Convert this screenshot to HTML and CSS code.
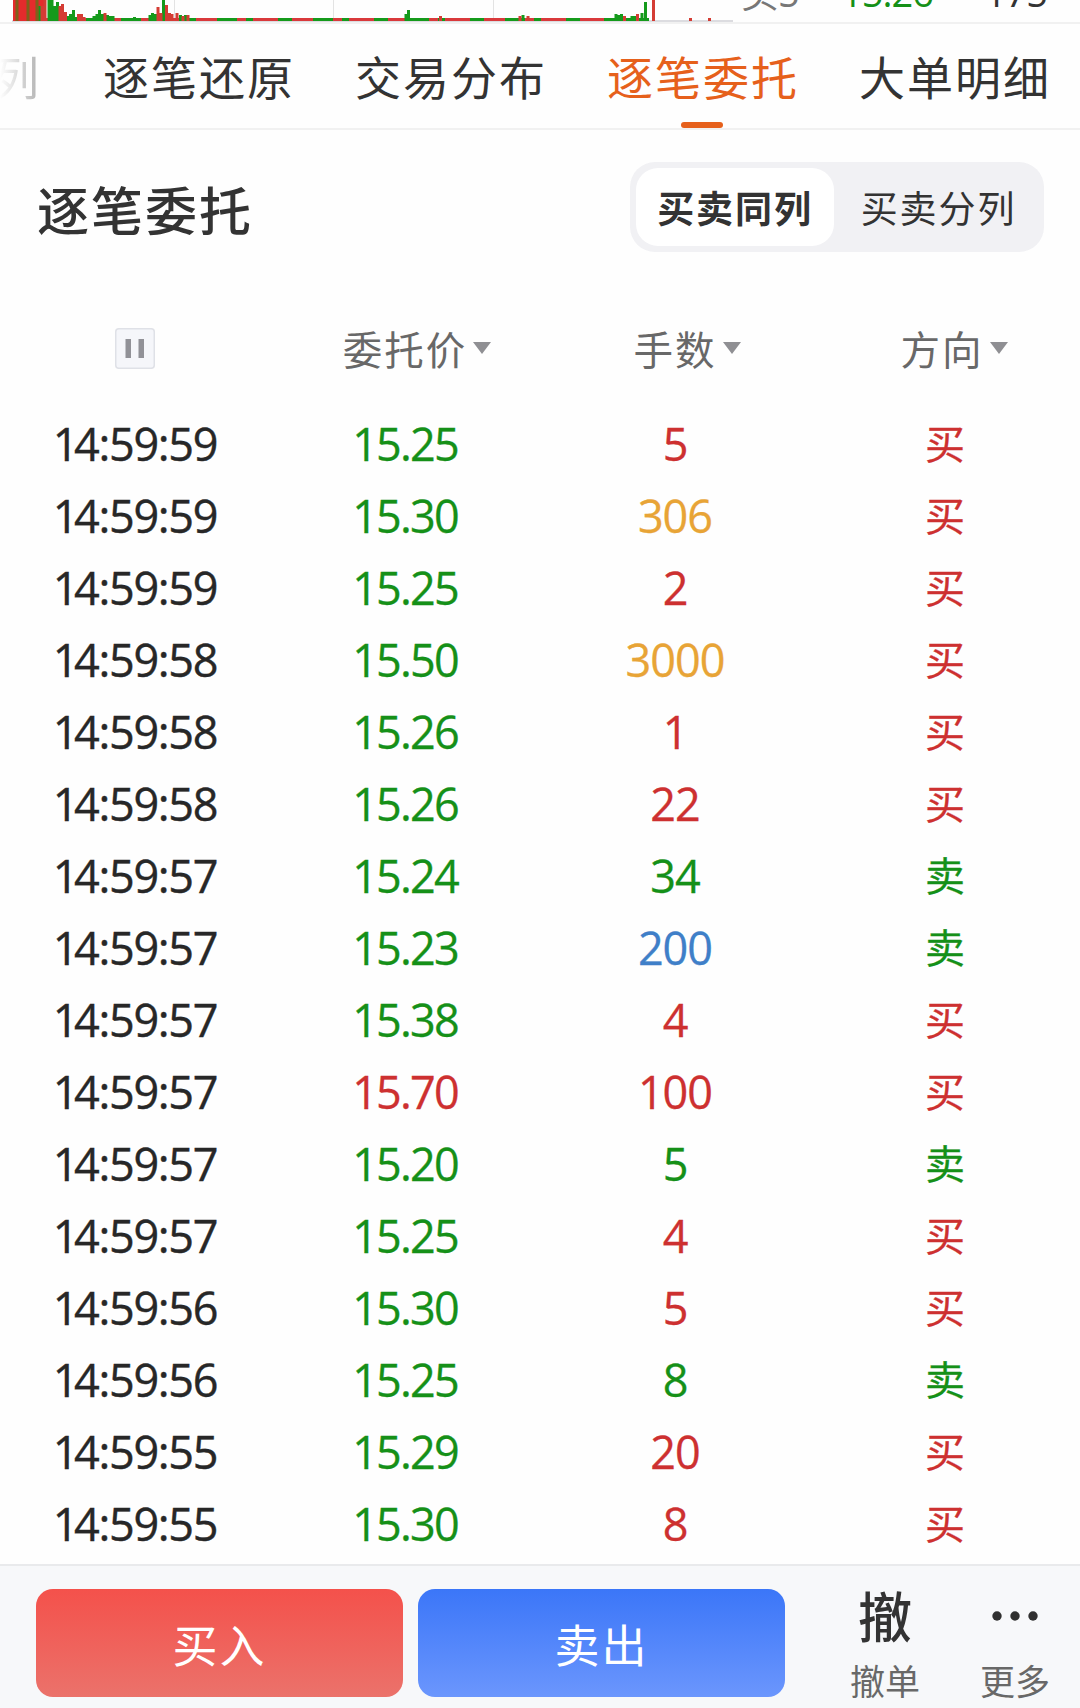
FILE: index.html
```html
<!DOCTYPE html>
<html lang="zh-CN">
<head>
<meta charset="utf-8">
<title>逐笔委托</title>
<link rel="stylesheet" href="styles.css">
</head>
<body>
<header class="market">
  <svg class="volume" width="733" height="24" viewBox="0 0 733 24" fill="none">
    <path stroke="#e3e3e3" stroke-width="1" d="M174.5 0V21M333.5 0V21M493.5 0V21"/>
    <path stroke="#dcdce0" stroke-width="2" d="M12 21H733"/>
    <path stroke="#d9393b" stroke-width="3" d="M13 19.5H649"/>
    <path stroke="#159a1b" stroke-width="3" stroke-dasharray="14 21 20 9 7 25" d="M86 19.5H600"/>
    <path stroke="#159a1b" stroke-width="3" d="M604 19.5H649"/>
    <path fill="#e52b2c" d="M13 0H46V21H13z"/>
    <path stroke="#80611b" stroke-width="3" d="M17 0V21M28 0V21M37 0V21"/>
    <path stroke="#159a1b" stroke-width="3" d="M40 6V21M49 0V21M52 0V21M55 6V21M57.5 2V21M68 16V21M70.500 14V21M73.500 10V21M76 17V21M94 16V21M97 14V21M99.500 10V21M102.500 14V21M107.500 15V21M110.500 16V21M113 16V21M134.500 17V21M150 15V21M152.500 13V21M155.500 14V21M163.500 0V21M180.500 15V21M185.500 15V21M406 14V21M408.500 10V21M523 15V21M616 14V21M618.500 15V21M621.500 14V21M632 16V21M634.500 16V21M642 13V21M645.500 2V21"/>
    <path stroke="#d43c34" stroke-width="3" d="M42 6V21M45 0V21M60 6V21M62.500 4V21M65.500 12V21M78.500 14V21M81.500 14V21M84 17V21M105 13V21M158 7V21M161 13V21M166.500 5V21M169.500 13V21M172 14V21M177 13V21M183 16V21M188 15V21M440.500 16V21M520 16V21M528 16V21M624.500 16V21M637.500 14V21M653.500 0V21M690.500 18V21M709.500 18V21"/>
  </svg>
  <div class="quote"><span class="side">买5</span><span class="price down">15.26</span><span class="vol">175</span></div>
</header>
<nav class="tabs">
  <span class="tab faded">列</span>
  <span class="tab">逐笔还原</span>
  <span class="tab">交易分布</span>
  <span class="tab active">逐笔委托</span>
  <span class="tab">大单明细</span>
</nav>
<section class="heading">
  <h1>逐笔委托</h1>
  <div class="segment"><span class="option chosen">买卖同列</span><span class="option">买卖分列</span></div>
</section>
<main class="table">
  <div class="row head">
    <span><svg class="pause" width="40" height="41" viewBox="0 0 40 41"><rect x=".75" y=".75" width="38.500" height="39.500" rx="3" fill="#f5f6fa" stroke="#dfe1e7" stroke-width="1.500"/><path fill="#919197" d="M10.500 11h5.500v19h-5.500zM23.500 11h5.500v19h-5.500z"/></svg></span>
    <span><b class="sort">委托价</b></span><span><b class="sort">手数</b></span><span><b class="sort">方向</b></span>
  </div>
  <div class="row"><time>14:59:59</time><span class="down">15.25</span><span class="up">5</span><span class="up">买</span></div>
  <div class="row"><time>14:59:59</time><span class="down">15.30</span><span class="large">306</span><span class="up">买</span></div>
  <div class="row"><time>14:59:59</time><span class="down">15.25</span><span class="up">2</span><span class="up">买</span></div>
  <div class="row"><time>14:59:58</time><span class="down">15.50</span><span class="large">3000</span><span class="up">买</span></div>
  <div class="row"><time>14:59:58</time><span class="down">15.26</span><span class="up">1</span><span class="up">买</span></div>
  <div class="row"><time>14:59:58</time><span class="down">15.26</span><span class="up">22</span><span class="up">买</span></div>
  <div class="row"><time>14:59:57</time><span class="down">15.24</span><span class="down">34</span><span class="down">卖</span></div>
  <div class="row"><time>14:59:57</time><span class="down">15.23</span><span class="medium">200</span><span class="down">卖</span></div>
  <div class="row"><time>14:59:57</time><span class="down">15.38</span><span class="up">4</span><span class="up">买</span></div>
  <div class="row"><time>14:59:57</time><span class="up">15.70</span><span class="up">100</span><span class="up">买</span></div>
  <div class="row"><time>14:59:57</time><span class="down">15.20</span><span class="down">5</span><span class="down">卖</span></div>
  <div class="row"><time>14:59:57</time><span class="down">15.25</span><span class="up">4</span><span class="up">买</span></div>
  <div class="row"><time>14:59:56</time><span class="down">15.30</span><span class="up">5</span><span class="up">买</span></div>
  <div class="row"><time>14:59:56</time><span class="down">15.25</span><span class="down">8</span><span class="down">卖</span></div>
  <div class="row"><time>14:59:55</time><span class="down">15.29</span><span class="up">20</span><span class="up">买</span></div>
  <div class="row"><time>14:59:55</time><span class="down">15.30</span><span class="up">8</span><span class="up">买</span></div>
</main>
<footer class="actions">
  <button class="trade buy">买入</button>
  <button class="trade sell">卖出</button>
  <div class="tool"><span class="glyph">撤</span><span class="label">撤单</span></div>
  <div class="tool"><svg class="glyph" width="54" height="54" viewBox="0 0 54 54" fill="#303030"><circle cx="9" cy="27" r="4.700"/><circle cx="27" cy="27" r="4.700"/><circle cx="45" cy="27" r="4.700"/></svg><span class="label">更多</span></div>
</footer>
</body>
</html>
```
FILE: styles.css
```css
* { box-sizing: border-box; }
body {
  margin: 0;
  width: 1080px;
  height: 1708px;
  overflow: hidden;
  display: flex;
  flex-direction: column;
  background: #fefefe;
  color: #333;
  font-family: "Open Sans", "Noto Sans CJK SC", sans-serif;
}
.down { color: #159018; }
.up { color: #cd3030; }
.large { color: #e8a436; }
.medium { color: #3f7fc8; }

.market {
  height: 24px;
  flex: none;
  display: flex;
  overflow: hidden;
  border-bottom: 2px solid #f1f1f1;
}
.volume { flex: none; }
.quote {
  flex: 1;
  display: grid;
  grid-template-columns: 80px 112px 114px;
  height: 44px;
  margin-top: -30px;
  padding-left: 8px;
  line-height: 44px;
  font-size: 38px;
  letter-spacing: -1px;
}
.side { color: #777; }
.price, .vol { text-align: right; }

.tabs {
  height: 106px;
  flex: none;
  display: flex;
  gap: 60px;
  border-bottom: 2px solid #f1f1f1;
}
.tab {
  position: relative;
  width: 192px;
  flex: none;
  font-family: "Noto Sans CJK SC", sans-serif;
  font-size: 46px;
  letter-spacing: 2px;
  line-height: 103px;
  white-space: nowrap;
}
.tab.faded {
  width: 43px;
  text-indent: -7px;
  color: transparent;
  background: linear-gradient(90deg, #fefefe, #ababab);
  background-clip: text;
}
.tab.active { color: #e6601b; }
.tab.active::after {
  content: "";
  position: absolute;
  left: 74px;
  bottom: 0;
  width: 42px;
  height: 6px;
  border-radius: 3px;
  background: #e6601b;
}

.heading {
  height: 184px;
  flex: none;
  display: flex;
  justify-content: space-between;
  align-items: flex-start;
  padding: 32px 36px 0 37px;
}
h1 {
  margin: 0;
  font-family: "Noto Sans CJK SC", sans-serif;
  font-size: 52px;
  font-weight: 500;
  letter-spacing: 2px;
  line-height: 93px;
}
.segment {
  display: flex;
  width: 414px;
  height: 90px;
  padding: 6px;
  border-radius: 25px;
  background: #f1f1f4;
}
.option {
  flex: 1 0 0;
  font-family: "Noto Sans CJK SC", sans-serif;
  font-size: 37px;
  letter-spacing: 1.9px;
  line-height: 79px;
  text-align: center;
  padding-left: 5px;
}
.chosen {
  flex: 0 0 198px;
  padding-left: 0;
  border-radius: 22px;
  background: #fff;
  font-weight: 700;
}

.row {
  display: grid;
  grid-template-columns: repeat(4, 270px);
  height: 72px;
  text-align: center;
  font-size: 45px;
  line-height: 72px;
  letter-spacing: -1px;
}
.row time {
  color: #272727;
  letter-spacing: -1.3px;
  -webkit-text-stroke: .4px;
}
.row time::first-letter { letter-spacing: -4.5px; }
.row > :nth-child(2) { letter-spacing: -1.8px; }
.row > .up, .row > .down, .row > .large, .row > .medium { -webkit-text-stroke: .3px; }
.row > :last-child {
  font-family: "Noto Sans CJK SC", sans-serif;
  font-size: 40px;
  line-height: 68px;
  letter-spacing: 0;
}
.head { height: 94px; }
.pause { display: block; margin: 14px auto 0; }
.head > span:nth-child(n + 2) { line-height: 68px; font-size: 39px; }
.sort {
  position: relative;
  font-family: "Noto Sans CJK SC", sans-serif;
  font-weight: 400;
  font-size: 39.5px;
  letter-spacing: 2px;
  color: #686868;
}
.head > :last-child { padding-right: 6px; }
.sort::after {
  content: "";
  position: absolute;
  left: calc(100% + 6px);
  top: 23px;
  border: solid transparent;
  border-width: 12px 9px 0;
  border-top-color: #8f8f93;
}

.actions {
  margin-top: auto;
  height: 144px;
  flex: none;
  display: flex;
  padding: 23px 0 0 36px;
  border-top: 2px solid #e9eaec;
  background: #f7f8fa;
}
.trade {
  width: 367px;
  height: 108px;
  margin: 0 15px 0 0;
  padding: 0;
  border: 0;
  border-radius: 17px;
  color: #fff;
  font-family: "Noto Sans CJK SC", sans-serif;
  font-size: 45px;
  letter-spacing: 2px;
}
.buy { background: linear-gradient(#f4514b, #eb726b); }
.sell { background: linear-gradient(#3b76f8, #6b96fd); margin-right: 35px; }
.tool {
  width: 130px;
  display: flex;
  flex-direction: column;
  align-items: center;
  font-family: "Noto Sans CJK SC", sans-serif;
}
.glyph {
  height: 54px;
  font-size: 54px;
  font-weight: 500;
  line-height: 52px;
}
.label {
  margin-top: 15px;
  font-size: 35px;
  line-height: 44px;
  color: #686868;
}
```
